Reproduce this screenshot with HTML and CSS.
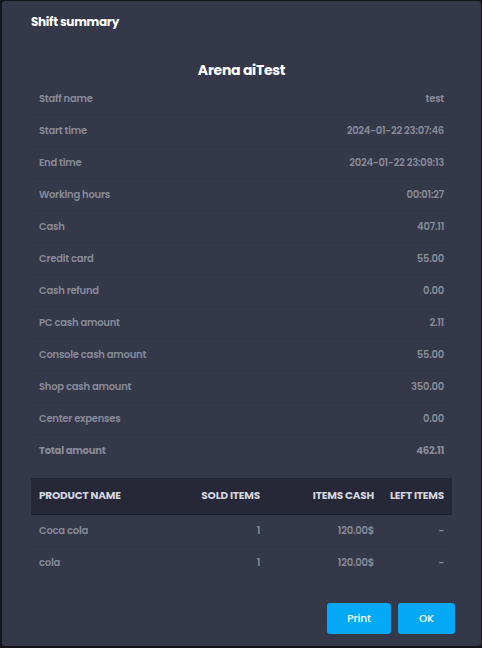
FILE: index.html
```html
<!DOCTYPE html>
<html>
<head>
<meta charset="utf-8">
<link rel="stylesheet" href="styles.css">
</head>
<body>
<div class="modal">
  <div class="modal-header">Shift summary</div>
  <div class="modal-body">
    <div class="center-name">Arena aiTest</div>
    <div class="summary">
      <div class="row"><span>Staff name</span><span>test</span></div>
      <div class="row"><span>Start time</span><span>2024-01-22 23:07:46</span></div>
      <div class="row"><span>End time</span><span>2024-01-22 23:09:13</span></div>
      <div class="row"><span>Working hours</span><span>00:01:27</span></div>
      <div class="row"><span>Cash</span><span>407.11</span></div>
      <div class="row"><span>Credit card</span><span>55.00</span></div>
      <div class="row"><span>Cash refund</span><span>0.00</span></div>
      <div class="row"><span>PC cash amount</span><span>2.11</span></div>
      <div class="row"><span>Console cash amount</span><span>55.00</span></div>
      <div class="row"><span>Shop cash amount</span><span>350.00</span></div>
      <div class="row"><span>Center expenses</span><span>0.00</span></div>
      <div class="row total"><span>Total amount</span><span>462.11</span></div>
    </div>
    <div class="products">
      <div class="prow phead">
        <span class="c-name">PRODUCT NAME</span>
        <span class="c-sold">SOLD ITEMS</span>
        <span class="c-cash">ITEMS CASH</span>
        <span class="c-left">LEFT ITEMS</span>
      </div>
      <div class="prow">
        <span class="c-name">Coca cola</span>
        <span class="c-sold">1</span>
        <span class="c-cash">120.00$</span>
        <span class="c-left">-</span>
      </div>
      <div class="prow last">
        <span class="c-name">cola</span>
        <span class="c-sold">1</span>
        <span class="c-cash">120.00$</span>
        <span class="c-left">-</span>
      </div>
    </div>
  </div>
  <div class="modal-footer">
    <button class="btn">Print</button>
    <button class="btn btn-ok">OK</button>
  </div>
</div>
</body>
</html>
```
FILE: styles.css
```css
html, body {
  margin: 0;
  padding: 0;
  background: #14151c;
  height: 648px;
  overflow: hidden;
}
body {
  font-family: "Poppins", "Open Sans", "Noto Sans", sans-serif;
  padding: 1px 1px 0 2px;
  box-sizing: border-box;
}
.modal {
  width: 479px;
  height: 645px;
  background: #343849;
  border-radius: 3px;
  display: flex;
  flex-direction: column;
}
.modal-header {
  padding: 12px 0 0 29px;
  height: 20px;
  font-size: 12px;
  line-height: 17px;
  font-weight: 700;
  color: #ffffff;
  letter-spacing: -0.3px;
}
.modal-body {
  padding: 0 29px 0 29px;
  flex: 1;
}
.center-name {
  margin-top: 27px;
  text-align: center;
  font-size: 14px;
  font-weight: 700;
  line-height: 20px;
  color: #ffffff;
  letter-spacing: -0.3px;
}
.summary {
  margin-top: 3px;
}
.row {
  display: flex;
  justify-content: space-between;
  align-items: center;
  height: 31px;
  padding: 0 8px;
  border-bottom: 1px solid #313549;
  font-size: 10px;
  font-weight: 600;
  color: #878b99;
  letter-spacing: -0.25px;
}
.row.total {
  font-weight: 700;
  border-bottom: none;
}
.products {
  margin-top: 12px;
}
.prow {
  display: flex;
  align-items: center;
  height: 31px;
  padding: 0 8px;
  border-bottom: 1px solid #313549;
  font-size: 10px;
  font-weight: 600;
  color: #878b99;
  letter-spacing: -0.25px;
}
.prow.last {
  border-bottom: none;
}
.prow.phead {
  height: 36px;
  background: #262838;
  border-bottom: 1px solid #1f2130;
  color: #d3d5df;
  font-weight: 700;
  font-size: 10.5px;
  letter-spacing: -0.2px;
}
.c-name { width: 140px; }
.c-sold { width: 81px; text-align: right; }
.c-cash { width: 114px; text-align: right; }
.c-left { flex: 1; text-align: right; }
.modal-footer {
  display: flex;
  justify-content: flex-end;
  gap: 7px;
  padding: 0 26px 12px 0;
}
.btn {
  height: 31px;
  min-width: 57px;
  padding: 0 20px;
  border: none;
  border-radius: 3px;
  background: #03a9f4;
  color: #ffffff;
  font-family: inherit;
  font-size: 10.5px;
  font-weight: 500;
}
.btn-ok {
  width: 57px;
  padding: 0;
}
```
